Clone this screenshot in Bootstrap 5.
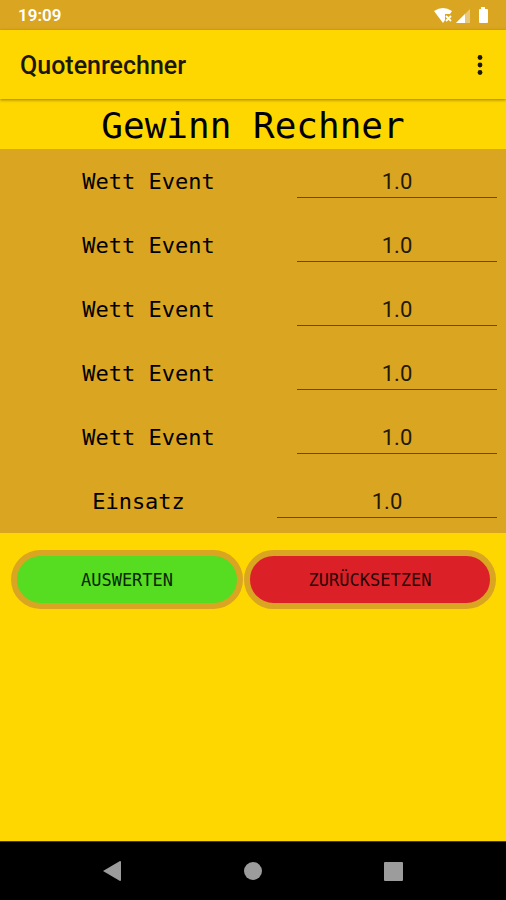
<!DOCTYPE html>
<html lang="de">
<head>
<meta charset="utf-8">
<meta name="viewport" content="width=device-width, initial-scale=1">
<title>Quotenrechner</title>
<link rel="stylesheet" href="https://cdn.jsdelivr.net/npm/bootstrap@5.3.0/dist/css/bootstrap.min.css">
<style>
  :root { --gold: #ffd700; --rod: #daa520; }
  body { background: var(--gold); color: #000; font-family: Roboto, sans-serif; }
  .mono { font-family: "DejaVu Sans Mono", monospace; }
  .status-bar { background: var(--rod); color: #fff; height: 30px; padding: 2px 16px 0 18px; font-size: 17px; font-weight: 600; }
  .app-bar { height: 69px; padding: 2px 20px 0 20px; box-shadow: 0 1px 3px rgba(90, 65, 0, .6); }
  .app-title { font-size: 25px; line-height: 32px; font-weight: 500; color: #1c1700; }
  .menu-btn { width: 12px; height: 32px; }
  .page-title { font-size: 36px; line-height: 46px; padding-top: 4px; font-weight: 400; }
  .bets { background: var(--rod); }
  .bet-row { display: grid; grid-template-columns: 297fr 209fr; height: 64px; }
  .bet-row.stake { grid-template-columns: 277fr 229fr; }
  .bet-label { font-size: 22px; line-height: 32px; padding-top: 2px; }
  .bet-input { font-size: 22px; line-height: 32px; height: 33px; color: #221a04; background: transparent; border: 0; border-bottom: 1px solid #664c0c; border-radius: 0; }
  .bet-cell { padding: 16px 9px 0 0; }
  .actions { display: grid; grid-template-columns: 232fr 252fr; gap: 1px; padding: 17px 10px 0 11px; }
  .action-btn { height: 59px; border: 6px solid var(--rod); border-radius: 30px; font-size: 17px; line-height: 24px; color: #260404; }
  .go { background: #56dc20; color: #082604; }
  .reset { background: #db2127; }
  .nav-bar { background: #000; height: 59px; border-top: 1px solid #4a3e00; padding: 0 43px 2px; }
  .nav-bar svg { fill: #9c9c9c; }
</style>
<script src="https://cdn.jsdelivr.net/npm/bootstrap@5.3.0/dist/js/bootstrap.bundle.min.js" defer></script>
</head>
<body>
<div class="min-vh-100 d-flex flex-column">
  <div class="status-bar d-flex align-items-center justify-content-between">
    <span>19:09</span>
    <svg width="57" height="20" viewBox="0 0 57 20" fill="#fff" aria-hidden="true">
      <path d="M1 5Q10 -1 19 5L17 8H12V14L10 17Z"/>
      <path d="M13 10l5 5M18 10l-5 5" stroke="#fff" stroke-width="1.800"/>
      <path d="M37 3V17H23Z" opacity=".4"/>
      <path d="M32 8V17H23Z"/>
      <path d="M48 3V1h4v2h2q1 0 1 1V16q0 1-1 1H47q-1 0-1-1V4q0-1 1-1Z"/>
    </svg>
  </div>
  <header class="app-bar d-flex align-items-center justify-content-between">
    <h1 class="app-title m-0">Quotenrechner</h1>
    <button type="button" class="menu-btn btn p-0 border-0 d-flex align-items-center justify-content-center" aria-label="Menü">
      <svg width="6" height="22" viewBox="0 0 6 22" fill="#1c1700" aria-hidden="true"><circle cx="3" cy="2.500" r="2.400"/><circle cx="3" cy="10" r="2.400"/><circle cx="3" cy="17.500" r="2.400"/></svg>
    </button>
  </header>
  <main class="flex-grow-1">
    <h2 class="page-title mono text-center m-0">Gewinn Rechner</h2>
    <form>
      <div class="bets">
        <div class="bet-row"><label for="b1" class="bet-label mono text-center align-self-center">Wett Event</label><div class="bet-cell"><input id="b1" class="bet-input w-100 p-0 text-center" type="text" inputmode="decimal" value="1.0"></div></div>
        <div class="bet-row"><label for="b2" class="bet-label mono text-center align-self-center">Wett Event</label><div class="bet-cell"><input id="b2" class="bet-input w-100 p-0 text-center" type="text" inputmode="decimal" value="1.0"></div></div>
        <div class="bet-row"><label for="b3" class="bet-label mono text-center align-self-center">Wett Event</label><div class="bet-cell"><input id="b3" class="bet-input w-100 p-0 text-center" type="text" inputmode="decimal" value="1.0"></div></div>
        <div class="bet-row"><label for="b4" class="bet-label mono text-center align-self-center">Wett Event</label><div class="bet-cell"><input id="b4" class="bet-input w-100 p-0 text-center" type="text" inputmode="decimal" value="1.0"></div></div>
        <div class="bet-row"><label for="b5" class="bet-label mono text-center align-self-center">Wett Event</label><div class="bet-cell"><input id="b5" class="bet-input w-100 p-0 text-center" type="text" inputmode="decimal" value="1.0"></div></div>
        <div class="bet-row stake"><label for="stake" class="bet-label mono text-center align-self-center">Einsatz</label><div class="bet-cell"><input id="stake" class="bet-input w-100 p-0 text-center" type="text" inputmode="decimal" value="1.0"></div></div>
      </div>
      <div class="actions">
        <button type="button" class="action-btn go mono p-0">AUSWERTEN</button>
        <button type="reset" class="action-btn reset mono p-0">ZURÜCKSETZEN</button>
      </div>
    </form>
  </main>
  <nav class="nav-bar d-flex align-items-center" aria-label="System">
    <div class="row g-0 w-100 text-center">
      <div class="col"><button type="button" class="btn p-0 border-0 d-inline-flex" aria-label="Zurück"><svg width="20" height="22" viewBox="0 0 20 22"><path d="M0 11L17 1q1 0 1 1V20q0 1-1 1Z"/></svg></button></div>
      <div class="col"><button type="button" class="btn p-0 border-0 d-inline-flex" aria-label="Startseite"><svg width="20" height="22" viewBox="0 0 20 22"><circle cx="10" cy="11" r="9"/></svg></button></div>
      <div class="col"><button type="button" class="btn p-0 border-0 d-inline-flex" aria-label="Übersicht"><svg width="20" height="22" viewBox="0 0 20 22"><rect x="1" y="2" width="19" height="19" rx="1"/></svg></button></div>
    </div>
  </nav>
</div>
</body>
</html>
